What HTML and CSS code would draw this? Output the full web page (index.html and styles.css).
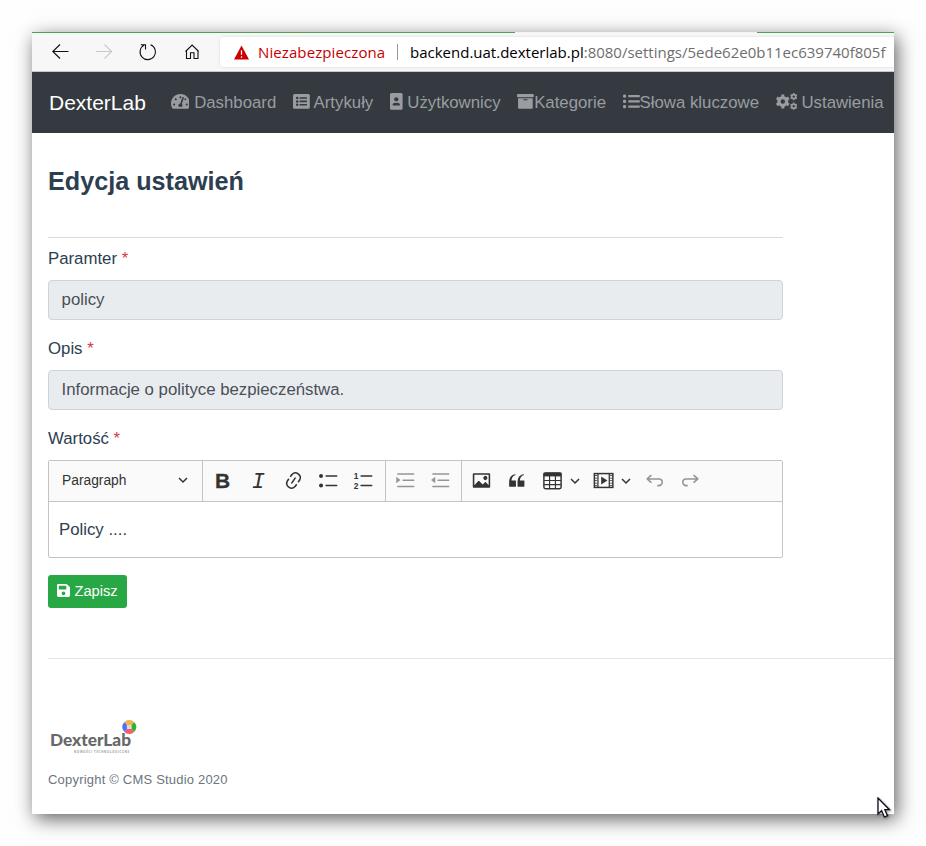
FILE: index.html
```html
<!DOCTYPE html>
<html lang="pl">
<head>
<meta charset="utf-8">
<title>Edycja ustawień</title>
<link rel="stylesheet" href="styles.css">
</head>
<body>
<div class="window">
  <div class="tabline"><span></span></div>
  <div class="browser">
    <svg class="tools" viewBox="0 0 188 38" fill="none" stroke="#111" stroke-width="1.1">
      <path d="M36.5 18.5H21M28 11.5l-7.200 7 7.200 7"/>
      <path stroke="#c9c9c9" d="M64 18.500h15.500M72.500 11.500l7.200 7-7.200 7"/>
      <path d="M118.500 11.700a7.700 7.700 0 1 1-6.300.4M108.800 11.700h4.700v4.700"/>
      <path d="M153.500 18.500l6.600-6.500 6.600 6.500M154.500 17.500v8h4v-5.800h3.500v5.800h4v-8"/>
    </svg>
    <div class="address">
      <svg class="warn" viewBox="0 0 16 15"><path fill="#c00" d="M8 0l8 15H0z"/><path stroke="#fff" stroke-width="1.300" d="M8 5v5M8 11.500v1.500"/></svg>
      <span class="unsafe">Niezabezpieczona</span><i></i>
      <span class="url"><b>backend.uat.dexterlab.pl</b>:8080/settings/5ede62e0b11ec639740f805f</span>
    </div>
  </div>
  <nav class="nav">
    <span class="brand">DexterLab</span>
    <span class="item"><svg style="width:18.9px" viewBox="0 0 576 512"><path d="M288 32C128.94 32 0 160.94 0 320c0 52.8 14.25 102.26 39.06 144.8 5.61 9.62 16.3 15.2 27.44 15.2h443c11.14 0 21.83-5.58 27.44-15.2C561.75 422.26 576 372.8 576 320c0-159.06-128.94-288-288-288zm0 64c14.71 0 26.58 10.13 30.32 23.65-1.11 2.26-2.64 4.23-3.45 6.67l-9.22 27.67c-5.13 3.49-10.97 6.01-17.64 6.01-17.67 0-32-14.33-32-32S270.33 96 288 96zM96 384c-17.67 0-32-14.33-32-32s14.33-32 32-32 32 14.33 32 32-14.33 32-32 32zm48-160c-17.67 0-32-14.33-32-32s14.33-32 32-32 32 14.33 32 32-14.33 32-32 32zm246.77-72.41l-61.33 184C343.13 347.33 352 364.54 352 384c0 11.72-3.38 22.55-8.88 32H232.88c-5.5-9.45-8.88-20.28-8.88-32 0-33.94 26.5-61.43 59.9-63.59l61.34-184.01c4.17-12.56 17.73-19.45 30.36-15.17 12.57 4.19 19.35 17.79 15.17 30.36zm14.66 57.2l15.52-46.55c3.47-1.29 7.13-2.23 11.05-2.23 17.67 0 32 14.33 32 32s-14.33 32-32 32c-11.38-.01-20.89-6.28-26.57-15.22zM480 384c-17.67 0-32-14.33-32-32s14.33-32 32-32 32 14.33 32 32-14.33 32-32 32z"/></svg> Dashboard</span>
    <span class="item"><svg style="width:16.8px" viewBox="0 0 512 512"><rect y="32" width="512" height="448" rx="48"/><g fill="#343a40"><circle cx="128" cy="152" r="38"/><circle cx="128" cy="256" r="38"/><circle cx="128" cy="360" r="38"/><path d="M200 128h224v48H200zM200 232h224v48H200zM200 336h224v48H200z"/></g></svg> Artykuły</span>
    <span class="item"><svg style="width:12.6px" viewBox="0 0 384 512"><rect width="384" height="512" rx="48"/><g fill="#343a40"><circle cx="192" cy="192" r="64"/><path d="M80 365c0-37 30-67 67-67 30 12 60 12 90 0 37 0 67 30 67 67 0 11-10 19-22 19H102c-12 0-22-8-22-19z"/></g></svg> Użytkownicy</span>
    <span class="item"><svg style="width:16.8px" viewBox="0 0 512 512"><rect y="32" width="512" height="96" rx="30"/><path d="M32 160h448v288q0 32-32 32H64q-32 0-32-32z"/><rect x="192" y="192" width="128" height="32" rx="10" fill="#343a40"/></svg>Kategorie</span>
    <span class="item"><svg style="width:16.8px" viewBox="0 0 512 512"><rect y="48" width="96" height="96" rx="40"/><rect y="208" width="96" height="96" rx="40"/><rect y="368" width="96" height="96" rx="40"/><rect x="160" y="64" width="352" height="64" rx="16"/><rect x="160" y="224" width="352" height="64" rx="16"/><rect x="160" y="384" width="352" height="64" rx="16"/></svg>Słowa kluczowe</span>
    <span class="item"><svg style="width:21px" viewBox="0 0 640 512"><g fill="none" stroke="#9a9da0"><circle cx="207" cy="256" r="118" stroke-width="100"/><path stroke-width="92" d="M207 42v70M207 400v70M22 149l61 35M331 328l61 35M22 363l61-35M331 184l61-35"/><circle cx="540" cy="110" r="62" stroke-width="52"/><path stroke-width="50" d="M540 0v30M540 190v30M444 55l30 17M606 148l30 17M444 165l30-17M606 72l30-17"/><circle cx="540" cy="402" r="62" stroke-width="52"/><path stroke-width="50" d="M540 292v30M540 482v30M444 347l30 17M606 440l30 17M444 457l30-17M606 364l30-17"/></g></svg> Ustawienia</span>
  </nav>
  <main class="page">
    <h1>Edycja ustawień</h1>
    <form class="form">
      <label>Paramter <em>*</em></label>
      <div class="field">policy</div>
      <label>Opis <em>*</em></label>
      <div class="field">Informacje o polityce bezpieczeństwa.</div>
      <label>Wartość <em>*</em></label>
      <div class="editor">
        <div class="toolbar">
          <div class="heading"><span>Paragraph</span><svg class="chev" viewBox="0 0 10 10"><path d="M1 3l4 4 4-4"/></svg></div>
          <div class="group marks">
            <span class="btn bold">B</span>
            <span class="btn italic">I</span>
            <span class="btn"><svg viewBox="0 0 20 20"><path d="m11.077 15 .991-1.416a.75.75 0 1 1 1.229.86l-1.148 1.64a.748.748 0 0 1-.217.206 5.251 5.251 0 0 1-8.503-5.955.741.741 0 0 1 .12-.274l1.147-1.639a.75.75 0 1 1 1.228.86L4.933 10.7l.006.003a3.75 3.75 0 0 0 6.132 4.294l.006.004zm5.494-5.335a.748.748 0 0 1-.12.274l-1.147 1.639a.75.75 0 1 1-1.228-.86l.86-1.23a3.75 3.75 0 0 0-6.144-4.301l-.86 1.229a.75.75 0 0 1-1.229-.86l1.148-1.64a.748.748 0 0 1 .217-.206 5.251 5.251 0 0 1 8.503 5.955zm-4.563-2.532a.75.75 0 0 1 .184 1.045l-3.155 4.505a.75.75 0 1 1-1.229-.86l3.155-4.506a.75.75 0 0 1 1.045-.184z"/></svg></span>
            <span class="btn"><svg viewBox="0 0 20 20"><circle cx="2.900" cy="5.700" r="1.900"/><circle cx="2.900" cy="14.800" r="1.900"/><rect x="7" y="5" width="11.500" height="1.500" rx=".7"/><rect x="7" y="14" width="11.500" height="1.500" rx=".7"/></svg></span>
            <span class="btn"><svg viewBox="0 0 20 20"><text x="0.800" y="8.300">1</text><text x="0.800" y="18">2</text><rect x="7" y="5" width="11.500" height="1.500" rx=".7"/><rect x="7" y="14" width="11.500" height="1.500" rx=".7"/></svg></span>
          </div>
          <div class="group dents">
            <span class="btn off"><svg viewBox="0 0 20 20"><path d="M1.200 6.500v6.200l4-3.100z"/><rect x="2" y="3" width="16.500" height="1.500" rx=".7"/><rect x="7" y="9" width="11.500" height="1.500" rx=".7"/><rect x="2" y="15" width="16.500" height="1.500" rx=".7"/></svg></span>
            <span class="btn off"><svg viewBox="0 0 20 20"><path d="M5 6.500v6.200l-4-3.100z"/><rect x="2" y="3" width="16.500" height="1.500" rx=".7"/><rect x="7" y="9" width="11.500" height="1.500" rx=".7"/><rect x="2" y="15" width="16.500" height="1.500" rx=".7"/></svg></span>
          </div>
          <div class="group inserts">
            <span class="btn"><svg viewBox="0 0 20 20"><path d="M6.910 10.540c.26-.23.64-.21.88.03l3.360 3.140 2.230-2.060a.64.64 0 0 1 .87 0l2.520 2.970V4.500H3.200v10.120l3.710-4.080zm10.270-7.510c.6 0 1.090.47 1.090 1.050v11.840c0 .59-.49 1.060-1.090 1.060H2.790c-.6 0-1.090-.47-1.090-1.060V4.080c0-.58.49-1.050 1.100-1.050h14.380zm-5.220 5.560a1.960 1.960 0 1 1 3.400-1.960 1.960 1.960 0 0 1-3.400 1.960z"/></svg></span>
            <span class="btn"><svg viewBox="0 0 20 20"><path d="M3 10.423a6.500 6.500 0 0 1 6.056-6.408l.038.67C6.448 5.423 5.354 7.663 5.220 10H9c.552 0 .5.432.5.986v4.511c0 .554-.448.503-1 .503h-5c-.552 0-.5-.449-.5-1.003v-4.574zm8 0a6.500 6.500 0 0 1 6.056-6.408l.038.67c-2.646.739-3.740 2.979-3.873 5.315H17c.552 0 .5.432.5.986v4.511c0 .554-.448.503-1 .503h-5c-.552 0-.5-.449-.5-1.003v-4.574z"/></svg></span>
            <span class="btn split"><svg viewBox="0 0 20 20"><rect x="1.800" y="2.800" width="16.400" height="15" rx="1.500" fill="none" stroke="#333" stroke-width="1.400"/><path d="M1.500 2.500h17v3.600h-17z"/><path d="M7.200 5v13M12.800 5v13M2 10h16M2 14h16" fill="none" stroke="#333" stroke-width="1.100"/></svg><svg class="chev" viewBox="0 0 10 10"><path d="M1 3l4 4 4-4"/></svg></span>
            <span class="btn split"><svg viewBox="0 0 20 20"><rect x="1.300" y="3.400" width="17.600" height="13.200" fill="none" stroke="#333" stroke-width="1.400"/><path d="M4.700 3.500v13M15.500 3.500v13" stroke="#333" stroke-width="1.200"/><path d="M2.900 5v11M17.200 5v11" stroke="#333" stroke-width="2" stroke-dasharray=".7 1.700"/><path d="M7.800 6.300v7.400L13.700 10z"/></svg><svg class="chev" viewBox="0 0 10 10"><path d="M1 3l4 4 4-4"/></svg></span>
            <span class="btn off"><svg viewBox="0 0 20 20"><path class="line" d="M6.700 5.200L3 8.500l3.700 3.200M3 8.600h11.200a3.100 3.100 0 0 1 0 6.300h-1"/></svg></span>
            <span class="btn off"><svg viewBox="0 0 20 20"><path class="line" d="M13.300 5.200L17 8.500l-3.700 3.200M17 8.600H5.800a3.100 3.100 0 0 0 0 6.300h1"/></svg></span>
          </div>
        </div>
        <div class="content">Policy ....</div>
      </div>
      <button class="save" type="button"><svg viewBox="0 0 448 512"><path d="M433.941 129.941l-83.882-83.882A48 48 0 0 0 316.118 32H48C21.490 32 0 53.490 0 80v352c0 26.510 21.490 48 48 48h352c26.510 0 48-21.490 48-48V163.882a48 48 0 0 0-14.059-33.941zM224 416c-35.346 0-64-28.654-64-64 0-35.346 28.654-64 64-64s64 28.654 64 64c0 35.346-28.654 64-64 64zm96-304.520V212c0 6.627-5.373 12-12 12H76c-6.627 0-12-5.373-12-12V108c0-6.627 5.373-12 12-12h228.520c3.183 0 6.235 1.264 8.485 3.515l3.480 3.480A11.996 11.996 0 0 1 320 111.480z"/></svg> Zapisz</button>
    </form>
    <footer class="footer">
      <svg class="logo" viewBox="0 0 90 36">
        <text class="word" x="2" y="26.500" textLength="81" lengthAdjust="spacingAndGlyphs">DexterLab</text>
        <text class="sub" x="26" y="33.500" textLength="55" lengthAdjust="spacing">NOWOŚCI TECHNOLOGICZNE</text>
        <circle cx="81.300" cy="8" r="7.200" fill="#d5dae6"/>
        <path fill="#f9b23f" d="M76.500 3Q81.300-1 86.100 3L83.500 6h-4.400z"/>
        <path fill="#2eb52c" d="M86.300 3.200Q90.300 8 86.300 12.800L83.700 10.200V5.800z"/>
        <path fill="#fb5a5e" d="M76.500 13Q81.300 17 86.100 13L83.500 10h-4.400z"/>
        <path fill="#4c72fa" d="M76.300 3.200Q72.300 8 76.300 12.800L78.900 10.200V5.800z"/>
      </svg>
      <p>Copyright © CMS Studio 2020</p>
    </footer>
  </main>
  <svg class="cursor" viewBox="0 0 14 21"><path d="M1 1v16l3.600-3.400L7.300 20l3.200-1.300-2.700-6H12.500z" fill="#fff" stroke="#0c0c1c" stroke-width="1.300"/></svg>
</div>
</body>
</html>
```
FILE: styles.css
```css
* { box-sizing: border-box; }
body {
  margin: 0;
  padding: 32px;
  height: 846px;
  overflow: hidden;
  background: #fefefe;
  font-family: "Liberation Sans", Arial, sans-serif;
  font-size: 16.8px;
  color: #2c3e50;
}
.window {
  position: relative;
  width: 862px;
  height: 782px;
  background: #fff;
  box-shadow: 3px 5px 18px rgba(0, 0, 0, .62);
}
.tabline { height: 1px; background: #4f9f52; padding-left: 483px; }
.tabline span { display: block; width: 242px; height: 1px; background: #f3f3f3; }
.browser {
  display: flex;
  align-items: center;
  height: 39px;
  background: #f7f7f7;
  border-bottom: 1px solid #c6c8c9;
  overflow: hidden;
}
.tools { width: 188px; height: 38px; flex: none; }
.address {
  display: flex;
  align-items: center;
  flex: 1;
  min-width: 0;
  height: 30px;
  padding-left: 14px;
  background: #fff;
  border-radius: 4px 0 0 4px;
  box-shadow: 0 0 3px rgba(0, 0, 0, .12);
  font: 15px "Open Sans", "Noto Sans", sans-serif;
  white-space: nowrap;
}
.warn { width: 15px; height: 15px; margin-right: 9px; flex: none; }
.unsafe { width: 127px; flex: none; color: #c50000; letter-spacing: .1px; }
.address i { width: 1px; height: 16px; margin: 0 12px; background: #999; flex: none; }
.url { color: #6e6e6e; }
.url b { font-weight: 400; color: #000; }
.nav {
  display: flex;
  align-items: center;
  gap: 16.8px;
  height: 61px;
  padding-left: 17px;
  background: #343a40;
  color: #9a9da0;
  white-space: nowrap;
}
.brand { width: 104.8px; color: #fff; font-size: 21px; }
.item svg { height: 16.8px; vertical-align: -2.1px; fill: #9a9da0; }
.page { padding-left: 16px; }
h1 { margin: 0; padding-top: 33px; height: 104px; font-size: 25.2px; line-height: 30px; }
.form { width: 735px; border-top: 1px solid #d8dadc; padding-top: 8px; }
label { display: block; height: 34px; line-height: 25px; }
label em { font-style: normal; color: #dc3545; }
.field {
  height: 40px;
  margin-bottom: 16px;
  padding-left: 12.6px;
  line-height: 38px;
  background: #e9ecef;
  border: 1px solid #ced4da;
  border-radius: 4px;
  color: #495057;
}
.editor { height: 98px; border: 1px solid #c4c4c4; border-radius: 2px; }
.toolbar { display: flex; height: 41px; background: #fafafa; border-bottom: 1px solid #c4c4c4; }
.heading {
  display: flex;
  align-items: center;
  justify-content: space-between;
  width: 154px;
  padding: 0 14px 2px 13px;
  border-right: 1px solid #c4c4c4;
  color: #333;
  font-size: 13.8px;
}
.group { display: flex; align-items: center; padding-bottom: 1px; border-right: 1px solid #c4c4c4; }
.marks { width: 183px; padding-left: 2.5px; }
.dents { width: 76px; padding-left: 1.5px; }
.inserts { border: 0; padding-left: 2px; }
.btn { display: flex; align-items: center; justify-content: center; width: 35.2px; height: 38px; color: #333; }
.btn svg { width: 21px; height: 21px; fill: #333; }
.btn text { font: bold 8px "Liberation Sans", sans-serif; }
.bold { padding-right: 1px; font-size: 21px; font-weight: 700; -webkit-text-stroke: .3px #333; }
.italic { padding-top: 3px; font: italic 22px "Liberation Mono", monospace; }
.split { width: 51.500px; padding-left: 1px; gap: 7px; }
.chev, .btn .chev { width: 10px; height: 10px; fill: none; stroke: #333; stroke-width: 1.500; }
.off { opacity: .5; }
.line { fill: none; stroke: #333; stroke-width: 1.500; stroke-linecap: round; stroke-linejoin: round; }
.content { padding: 18px 10px; line-height: 19px; }
.save {
  display: block;
  margin: 17px 0 50px;
  width: 79px;
  height: 33px;
  padding: 0 0 2px;
  border: 0;
  border-radius: 3px;
  background: #28a745;
  color: #fff;
  font: 14.7px "Liberation Sans", sans-serif;
}
.save svg { width: 13px; height: 15px; fill: #fff; vertical-align: -2.500px; }
.footer { border-top: 1px solid #e3e4e5; padding-top: 60px; }
.logo { display: block; width: 90px; height: 36px; }
.word { font: 900 16.5px Lato, "Open Sans", sans-serif; fill: #686868; }
.sub { font: 700 2.800px "Open Sans", sans-serif; fill: #999; }
.footer p { margin: 17px 0 0; font-size: 13px; line-height: 16px; color: #6c757d; letter-spacing: .2px; }
.cursor { position: absolute; left: 845px; top: 765px; width: 14px; height: 21px; filter: drop-shadow(1px 1px 1px rgba(0, 0, 0, .4)); }
```
